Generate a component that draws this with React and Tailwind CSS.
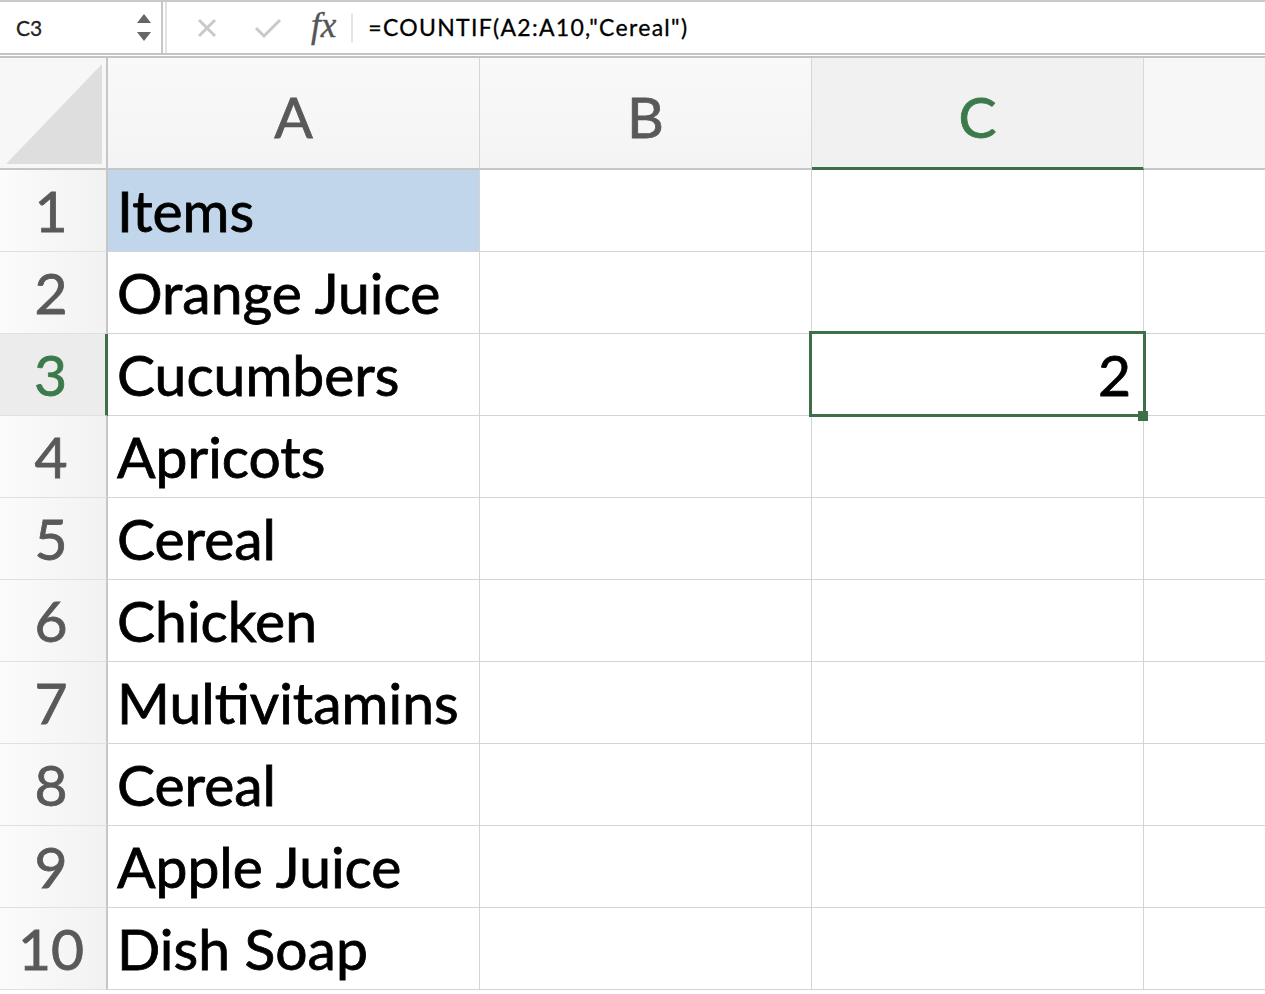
import React from 'react'

const items = ['Items', 'Orange Juice', 'Cucumbers', 'Apricots', 'Cereal', 'Chicken', 'Multivitamins', 'Cereal', 'Apple Juice', 'Dish Soap']
const cols = ['A', 'B', 'C']

const font = { fontFamily: 'Lato, "Open Sans", sans-serif' }

const FormulaBar = () => (
  <div className="flex h-[53px] bg-white border-t-2 border-[#c9c9c9]">
    <div className="w-[163px] flex items-center justify-between pl-[16px] pr-[10px] border-r-2 border-[#c6c6c6]">
      <span className="text-[21px] text-[#222] [-webkit-text-stroke:0.3px_currentColor]">C3</span>
      <div className="flex flex-col gap-[9px]">
        <svg width="14" height="9" viewBox="0 0 14 9"><path d="M7 0L14 9H0z" fill="#666" /></svg>
        <svg width="14" height="9" viewBox="0 0 14 9"><path d="M0 0H14L7 9z" fill="#666" /></svg>
      </div>
    </div>
    <div className="flex-1 flex items-center ml-[2px] border-l-2 border-[#e2e2e2]">
      <svg className="ml-[29px]" width="22" height="22" viewBox="0 0 22 22">
        <path d="M3 3L19 19M19 3L3 19" stroke="#c9c9c9" strokeWidth="3" />
      </svg>
      <svg className="ml-[36px]" width="28" height="22" viewBox="0 0 28 22">
        <path d="M2 11L10 19L26 3" stroke="#c9c9c9" strokeWidth="3" fill="none" />
      </svg>
      <span className="ml-[29px] text-[35px] leading-none italic text-[#555] -mt-[4px] [-webkit-text-stroke:0.4px_currentColor]" style={{ fontFamily: '"Liberation Serif", serif' }}>fx</span>
      <div className="ml-[15px] w-[2px] h-[30px] bg-[#e6e6e6]" />
      <span className="ml-[15px] text-[23px] tracking-[1.3px] text-black [-webkit-text-stroke:0.3px_currentColor]">=COUNTIF(A2:A10,"Cereal")</span>
    </div>
  </div>
)

const App = () => {
  return (
    <div className="w-[1265px] h-[994px] overflow-hidden bg-white" style={font}>
      <FormulaBar />
      <div className="h-[5px] border-y-2 border-[#c4c4c4] bg-white" />
      <div className="grid grid-cols-[108px_372px_332px_332px_1fr] [-webkit-text-stroke:0.8px_currentColor]">
        <div className="h-[112px] bg-[#f7f7f7] border-r-2 border-b-2 border-[#c6c6c6] flex p-[6px] pr-[4px] pb-[4px]">
          <svg className="w-full h-full" viewBox="0 0 100 100" preserveAspectRatio="none">
            <path d="M100 0V100H0z" fill="#dedede" />
          </svg>
        </div>
        {cols.map((c) => (
          <div
            key={c}
            className={
              c === 'C'
                ? 'h-[112px] flex items-center justify-center pt-[8px] text-[57px] text-[#3b7a4b] bg-[#f1f1f1] border-r border-[#d9d9d9] border-b-[3px] border-b-[#3e6f48]'
                : 'h-[112px] flex items-center justify-center pt-[8px] text-[57px] text-[#595959] bg-gradient-to-b from-[#f9f9f9] to-[#f4f4f4] border-r border-[#d6d6d6] border-b-2 border-b-[#c6c6c6]'
            }
          >
            {c}
          </div>
        ))}
        <div className="h-[112px] bg-[#f7f7f7] border-b-2 border-[#c6c6c6]" />

        {items.map((item, i) => {
          const n = i + 1
          const active = n === 3
          return (
            <React.Fragment key={n}>
              <div
                className={
                  active
                    ? 'h-[82px] flex items-center justify-center pr-[4px] text-[57px] text-[#3b7a4b] bg-[#ececec] border-b border-[#e0e0e0] border-r-[3px] border-r-[#3e6f48]'
                    : 'h-[82px] flex items-center justify-center pr-[4px] text-[57px] text-[#595959] bg-gradient-to-r from-[#fbfbfb] to-[#f2f2f2] border-b border-[#e0e0e0] border-r-2 border-r-[#c6c6c6]'
                }
              >
                {n}
              </div>
              <div
                className={
                  'h-[82px] flex items-center pl-[9px] text-[57px] text-black border-r border-b border-[#d4d4d4] whitespace-nowrap ' +
                  (n === 1 ? 'bg-[#c1d6ea]' : 'bg-white')
                }
              >
                {item}
              </div>
              <div className="h-[82px] border-r border-b border-[#d4d4d4]" />
              <div className="relative h-[82px] border-r border-b border-[#d4d4d4] flex items-center justify-end pr-[12px] text-[57px] text-black">
                {active && (
                  <>
                    <span>2</span>
                    <div className="absolute z-10 -top-[3px] -left-[3px] -right-[3px] -bottom-[2px] border-[3px] border-[#3e6f48]" />
                    <div className="absolute z-20 -right-[5px] -bottom-[6px] w-[10px] h-[10px] bg-[#3e6f48]" />
                  </>
                )}
              </div>
              <div className="h-[82px] border-b border-[#d4d4d4]" />
            </React.Fragment>
          )
        })}
      </div>
    </div>
  )
}

export default App
